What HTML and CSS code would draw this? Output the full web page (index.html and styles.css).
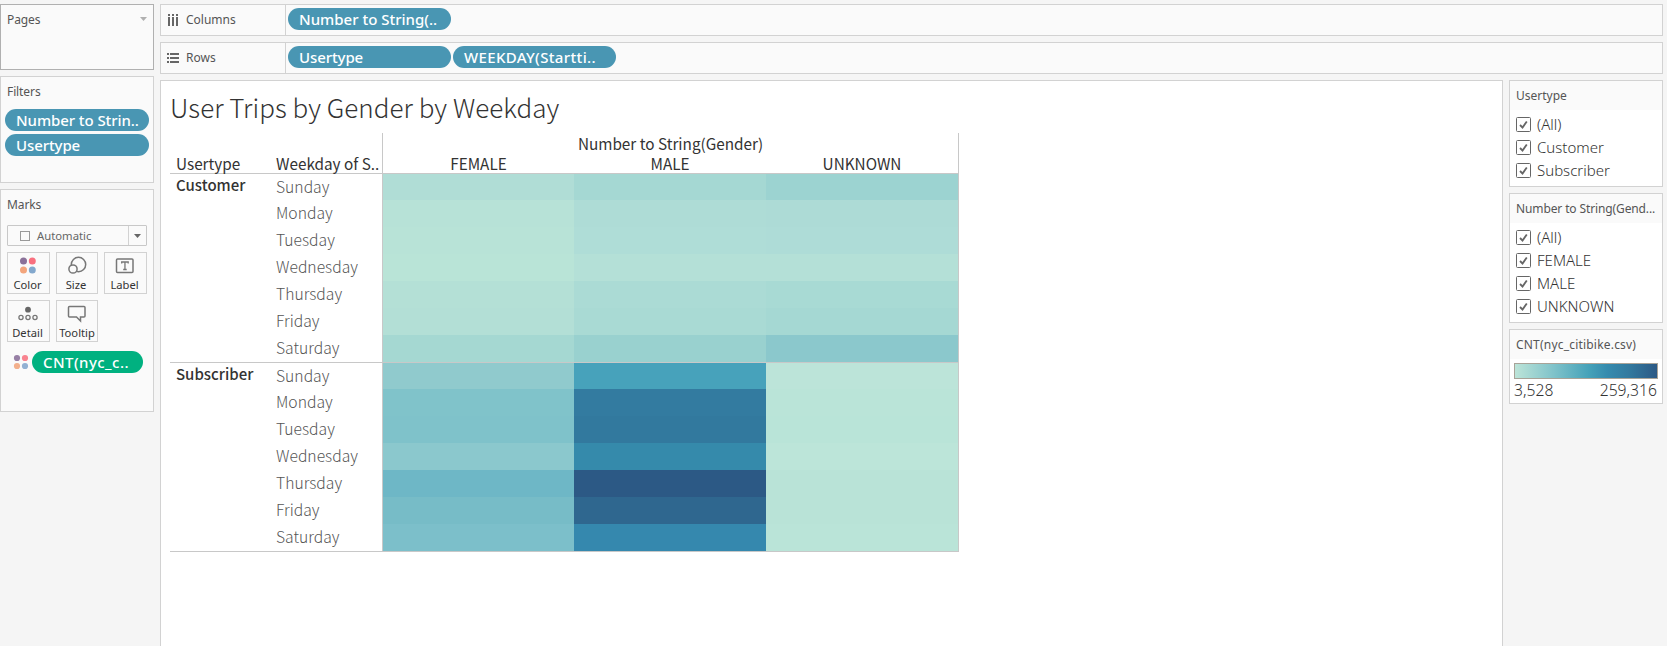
FILE: index.html
```html
<!DOCTYPE html>
<html lang="en">
<head>
<meta charset="utf-8">
<title>User Trips by Gender by Weekday</title>
<link rel="stylesheet" href="styles.css">
</head>
<body>
<div class="app">
  <aside class="side">
    <section class="card pages"><h2>Pages</h2><svg width="7" height="4"><path d="M0 0h7L3.5 4z" fill="#b0b0b0"/></svg></section>
    <section class="card filters"><h2>Filters</h2>
      <div class="pill w1">Number to Strin..</div>
      <div class="pill w2">Usertype</div>
    </section>
    <section class="card marks"><h2>Marks</h2>
      <div class="select"><i class="square"></i><span>Automatic</span><b><svg width="7" height="4"><path d="M0 0h7L3.5 4z" fill="#666"/></svg></b></div>
      <div class="buttons">
        <div class="btn"><svg width="41" height="26"><circle cx="15.5" cy="8" r="3.5" fill="#8a7199"/><circle cx="24.3" cy="8" r="3.5" fill="#f9707f"/><circle cx="15.5" cy="17" r="3.5" fill="#f3a57c"/><circle cx="24.3" cy="17" r="3.5" fill="#83a8cd"/></svg><span>Color</span></div>
        <div class="btn"><svg width="41" height="26" fill="#fafafa" stroke="#777" stroke-width="1.5"><circle cx="21.500" cy="11.500" r="7.200"/><circle cx="16" cy="16" r="4.100"/></svg><span>Size</span></div>
        <div class="btn"><svg width="41" height="26" fill="none" stroke="#777"><rect x="11.500" y="6" width="16.500" height="13.500" rx="1" stroke-width="1.500"/><path d="M16.700 10.500v-1.500h6.500v1.500M19.950 9v7.500M18.200 16.500h3.500" stroke-width="1.300"/></svg><span>Label</span></div>
        <div class="btn"><svg width="41" height="26" fill="none" stroke="#777" stroke-width="1.3"><circle cx="20" cy="8.700" r="2.900" fill="#666" stroke="none"/><circle cx="13" cy="16.500" r="2.100"/><circle cx="20" cy="16.500" r="2.100"/><circle cx="27" cy="16.500" r="2.100"/></svg><span>Detail</span></div>
        <div class="btn"><svg width="41" height="26" fill="none" stroke="#777" stroke-width="1.5"><path d="M12.500 5.500h14.500q1 0 1 1v8.500q0 1-1 1h-3.500v4l-4-4h-7q-1 0-1-1v-8.500q0-1 1-1z"/></svg><span class="tip">Tooltip</span></div>
      </div>
      <div class="encoding"><svg width="19" height="22"><circle cx="4" cy="7" r="3.100" fill="#9780a5"/><circle cx="12" cy="7" r="3.100" fill="#f98490"/><circle cx="4" cy="15" r="3.100" fill="#f3b08c"/><circle cx="12" cy="15" r="3.100" fill="#92b1d3"/></svg><div class="pill green">CNT(nyc_c..</div></div>
    </section>
  </aside>

  <main class="work">
    <section class="shelf"><div class="name"><svg width="12" height="12" fill="#666"><path d="M1 0h2v2H1zM5 0h2v2H5zM9 0h2v2H9zM1 3h2v9H1zM5 3h2v9H5zM9 3h2v9H9z"/></svg><span>Columns</span></div><div class="pill w3">Number to String(..</div></section>
    <section class="shelf"><div class="name"><svg width="12" height="12" fill="#666"><path d="M0 1h2v2H0zM0 5h2v2H0zM0 9h2v2H0zM3 1h9v2H3zM3 5h9v2H3zM3 9h9v2H3z"/></svg><span>Rows</span></div><div class="pill w4">Usertype</div><div class="pill w5">WEEKDAY(Startti..</div></section>
    <div class="lower">
      <section class="sheet">
        <h1>User Trips by Gender by Weekday</h1>
        <div class="viz">
          <div class="heads"><span class="h-user">Usertype</span><span class="h-day">Weekday of S..</span>
            <div class="h-cols"><div class="h-field">Number to String(Gender)</div><span>FEMALE</span><span>MALE</span><span>UNKNOWN</span></div>
          </div>
          <div class="group">
            <strong>Customer</strong>
            <div class="days"><span>Sunday</span><span>Monday</span><span>Tuesday</span><span>Wednesday</span><span>Thursday</span><span>Friday</span><span>Saturday</span></div>
            <div class="cells">
              <i style="background:#b0ddd6"></i><i style="background:#a5d8d3"></i><i style="background:#9cd3d1"></i>
              <i style="background:#b7e2d7"></i><i style="background:#aedcd6"></i><i style="background:#addbd6"></i>
              <i style="background:#b8e3d7"></i><i style="background:#afddd7"></i><i style="background:#aedcd7"></i>
              <i style="background:#b9e4d7"></i><i style="background:#b4e0d7"></i><i style="background:#b4e0d7"></i>
              <i style="background:#b4e0d6"></i><i style="background:#abdbd5"></i><i style="background:#a8dad4"></i>
              <i style="background:#b3dfd6"></i><i style="background:#a9dad4"></i><i style="background:#a5d8d3"></i>
              <i style="background:#a5d8d2"></i><i style="background:#99d1cf"></i><i style="background:#8bc8cc"></i>
            </div>
          </div>
          <div class="group">
            <strong>Subscriber</strong>
            <div class="days"><span>Sunday</span><span>Monday</span><span>Tuesday</span><span>Wednesday</span><span>Thursday</span><span>Friday</span><span>Saturday</span></div>
            <div class="cells">
              <i style="background:#90cacd"></i><i style="background:#47a2bb"></i><i style="background:#bce4d9"></i>
              <i style="background:#80c3ca"></i><i style="background:#337ba0"></i><i style="background:#bae4d8"></i>
              <i style="background:#7fc2ca"></i><i style="background:#32799e"></i><i style="background:#b9e4d8"></i>
              <i style="background:#8bc8cd"></i><i style="background:#358aab"></i><i style="background:#bce5d9"></i>
              <i style="background:#6eb7c6"></i><i style="background:#2c5985"></i><i style="background:#b9e3d7"></i>
              <i style="background:#77bcc7"></i><i style="background:#2f678f"></i><i style="background:#b9e3d7"></i>
              <i style="background:#7cbfca"></i><i style="background:#3588ae"></i><i style="background:#bae4d8"></i>
            </div>
          </div>
        </div>
      </section>

      <aside class="legends">
        <section class="card legend three"><h3>Usertype</h3>
          <ul><li><svg width="15" height="15"><use href="#check"/></svg><span>(All)</span></li><li><svg width="15" height="15"><use href="#check"/></svg><span>Customer</span></li><li><svg width="15" height="15"><use href="#check"/></svg><span>Subscriber</span></li></ul>
        </section>
        <section class="card legend four"><h3 class="t2">Number to String(Gend...</h3>
          <ul><li><svg width="15" height="15"><use href="#check"/></svg><span>(All)</span></li><li><svg width="15" height="15"><use href="#check"/></svg><span>FEMALE</span></li><li><svg width="15" height="15"><use href="#check"/></svg><span>MALE</span></li><li><svg width="15" height="15"><use href="#check"/></svg><span>UNKNOWN</span></li></ul>
        </section>
        <section class="card legend"><h3 class="t3">CNT(nyc_citibike.csv)</h3>
          <div class="ramp"></div>
          <div class="range"><span>3,528</span><span>259,316</span></div>
        </section>
      </aside>
    </div>
  </main>
</div>
<svg width="0" height="0" class="defs"><symbol id="check" viewBox="0 0 15 15"><rect x=".5" y=".5" width="14" height="14" rx="1" fill="#fff" stroke="#666"/><path d="M4 8l2.500 2.500L10.800 4.500" fill="none" stroke="#666" stroke-width="1.800"/></symbol></svg>
</body>
</html>
```
FILE: styles.css
```css
* { box-sizing: border-box; margin: 0; padding: 0; }
html, body { height: 646px; overflow: hidden; }
body { background: #f5f5f5; font-family: "Noto Sans", sans-serif; color: #555; }
svg { display: block; flex: none; }
.defs { position: absolute; }
i { font-style: normal; }

.app { display: flex; height: 646px; padding-top: 4px; }

/* Left column */
.side { width: 160px; display: flex; flex-direction: column; gap: 6px; flex: none; }
.card { background: #fafafa; border: 1px solid #d2d2d2; }
.side .card { width: 154px; }
.card h2 { font-size: 12px; font-weight: 400; line-height: 18px; letter-spacing: -.1px; }
.pages { height: 66px; border-color: #b0b0b0; padding: 6px 6px 0; display: flex; justify-content: space-between; }
.pages svg { margin-top: 6px; }
.filters { height: 107px; padding: 6px 4px 0; }
.filters h2 { padding-left: 2px; margin-bottom: 8px; }
.marks { height: 223px; padding: 6px; }

.pill { height: 22px; border-radius: 11px; background: #4996b3; color: #fff; font-size: 15px; font-weight: 500; line-height: 22px; padding-left: 11px; white-space: nowrap; overflow: hidden; }
.filters .pill { width: 144px; margin-bottom: 3px; }
.filters .w1 { letter-spacing: -.08px; }
.w2, .w4 { letter-spacing: -.1px; }
.shelf .w5 { letter-spacing: .35px; }

.select { display: flex; align-items: center; width: 140px; height: 21px; margin-top: 11px; border: 1px solid #c8c8c8; border-radius: 1px; padding-left: 12px; font-size: 11.300px; color: #666; }
.square { width: 10px; height: 10px; border: 1px solid #999; margin-right: 7px; }
.select span { flex: 1; }
.select b { width: 18px; height: 19px; border-left: 1px solid #d2d2d2; display: grid; place-items: center; }
.buttons { display: grid; grid-template-columns: 43px 42px 43px; column-gap: 6px; row-gap: 6px; margin-top: 6px; }
.btn { height: 42px; border: 1px solid #d2d2d2; display: flex; flex-direction: column; align-items: center; font-size: 11.200px; line-height: 12px; color: #333; }
.btn span { white-space: nowrap; margin-right: 2px; }
.btn .tip { margin-right: 0; }
.encoding { display: flex; margin: 9px 0 0 6px; }
.green { width: 111px; background: #00b180; letter-spacing: .45px; }

/* Shelves */
.work { width: 1503px; display: flex; flex-direction: column; gap: 6px; }
.shelf { height: 32px; flex: none; background: #fafafa; border: 1px solid #d2d2d2; display: flex; gap: 2px; padding-right: 4px; }
.shelf .name { width: 125px; border-right: 1px solid #d2d2d2; display: flex; align-items: center; gap: 7px; padding-left: 6px; font-size: 12px; }
.name svg { margin-bottom: 1px; }
.name span { margin-bottom: 2px; }
.shelf .pill { width: 163px; margin-top: 3px; }

.lower { display: flex; flex: 1; gap: 6px; }
.sheet { width: 1343px; background: #fff; border: 1px solid #d2d2d2; border-bottom: 0; padding: 8px 0 0 9px; font-family: "Noto Sans CJK SC", sans-serif; }
.sheet h1 { font-size: 26px; font-weight: 300; line-height: 36px; color: #333; letter-spacing: .03px; }

/* Heat map */
.viz { width: 789px; margin-top: 8px; color: #333; font-size: 15.300px; }
.heads { display: flex; height: 40px; line-height: 20px; }
.heads > span { padding-top: 20px; height: 40px; }
.h-user { width: 106px; padding-left: 6px; }
.h-day { width: 106px; }
.h-cols { width: 577px; border-left: 1px solid #c8c8c8; border-right: 1px solid #c8c8c8; display: grid; grid-template-columns: 191px 192px 192px; grid-template-rows: 20px 20px; text-align: center; }
.h-field { grid-column: 1 / 4; }
.group { display: grid; grid-template-columns: 106px 106px 577px; border-top: 1px solid #c8c8c8; }
.group:last-child { border-bottom: 1px solid #c8c8c8; }
.group strong { font-size: 15px; font-weight: 500; padding-left: 6px; line-height: 22px; }
.days { display: grid; grid-template-rows: 26px repeat(6, 27px); font-weight: 300; font-size: 15.700px; line-height: 25px; color: #555; }
.cells { display: grid; grid-template-columns: 191px 192px 192px; grid-template-rows: 26px repeat(6, 27px); border-left: 1px solid #c8c8c8; border-right: 1px solid #c8c8c8; }

/* Right column */
.legends { width: 154px; display: flex; flex-direction: column; gap: 6px; }
.legend { background: #fff; color: #333; }
.legend h3 { height: 29px; background: #fafafa; padding-left: 6px; font-size: 12px; font-weight: 400; line-height: 29px; color: #555; white-space: nowrap; }
.legend .t2 { letter-spacing: -.12px; }
.legend .t3 { letter-spacing: .2px; }
.three { height: 107px; }
.four { height: 130px; }
.legend ul { list-style: none; padding: 3px 6px 0; font-size: 15px; font-weight: 300; }
.legend li { display: flex; align-items: center; gap: 6px; height: 23px; line-height: 23px; }
.ramp { height: 16px; margin: 4px 4px 0; border: 1px solid #a8a398; background: linear-gradient(90deg, #bce4d8, #80c3ca 27%, #45a2b9 52%, #358bae 65%, #327a9f 80%, #2c5985); }
.range { display: flex; justify-content: space-between; padding: 1px 5px 2px 4px; font-size: 15.700px; font-weight: 300; line-height: 21px; }
```
